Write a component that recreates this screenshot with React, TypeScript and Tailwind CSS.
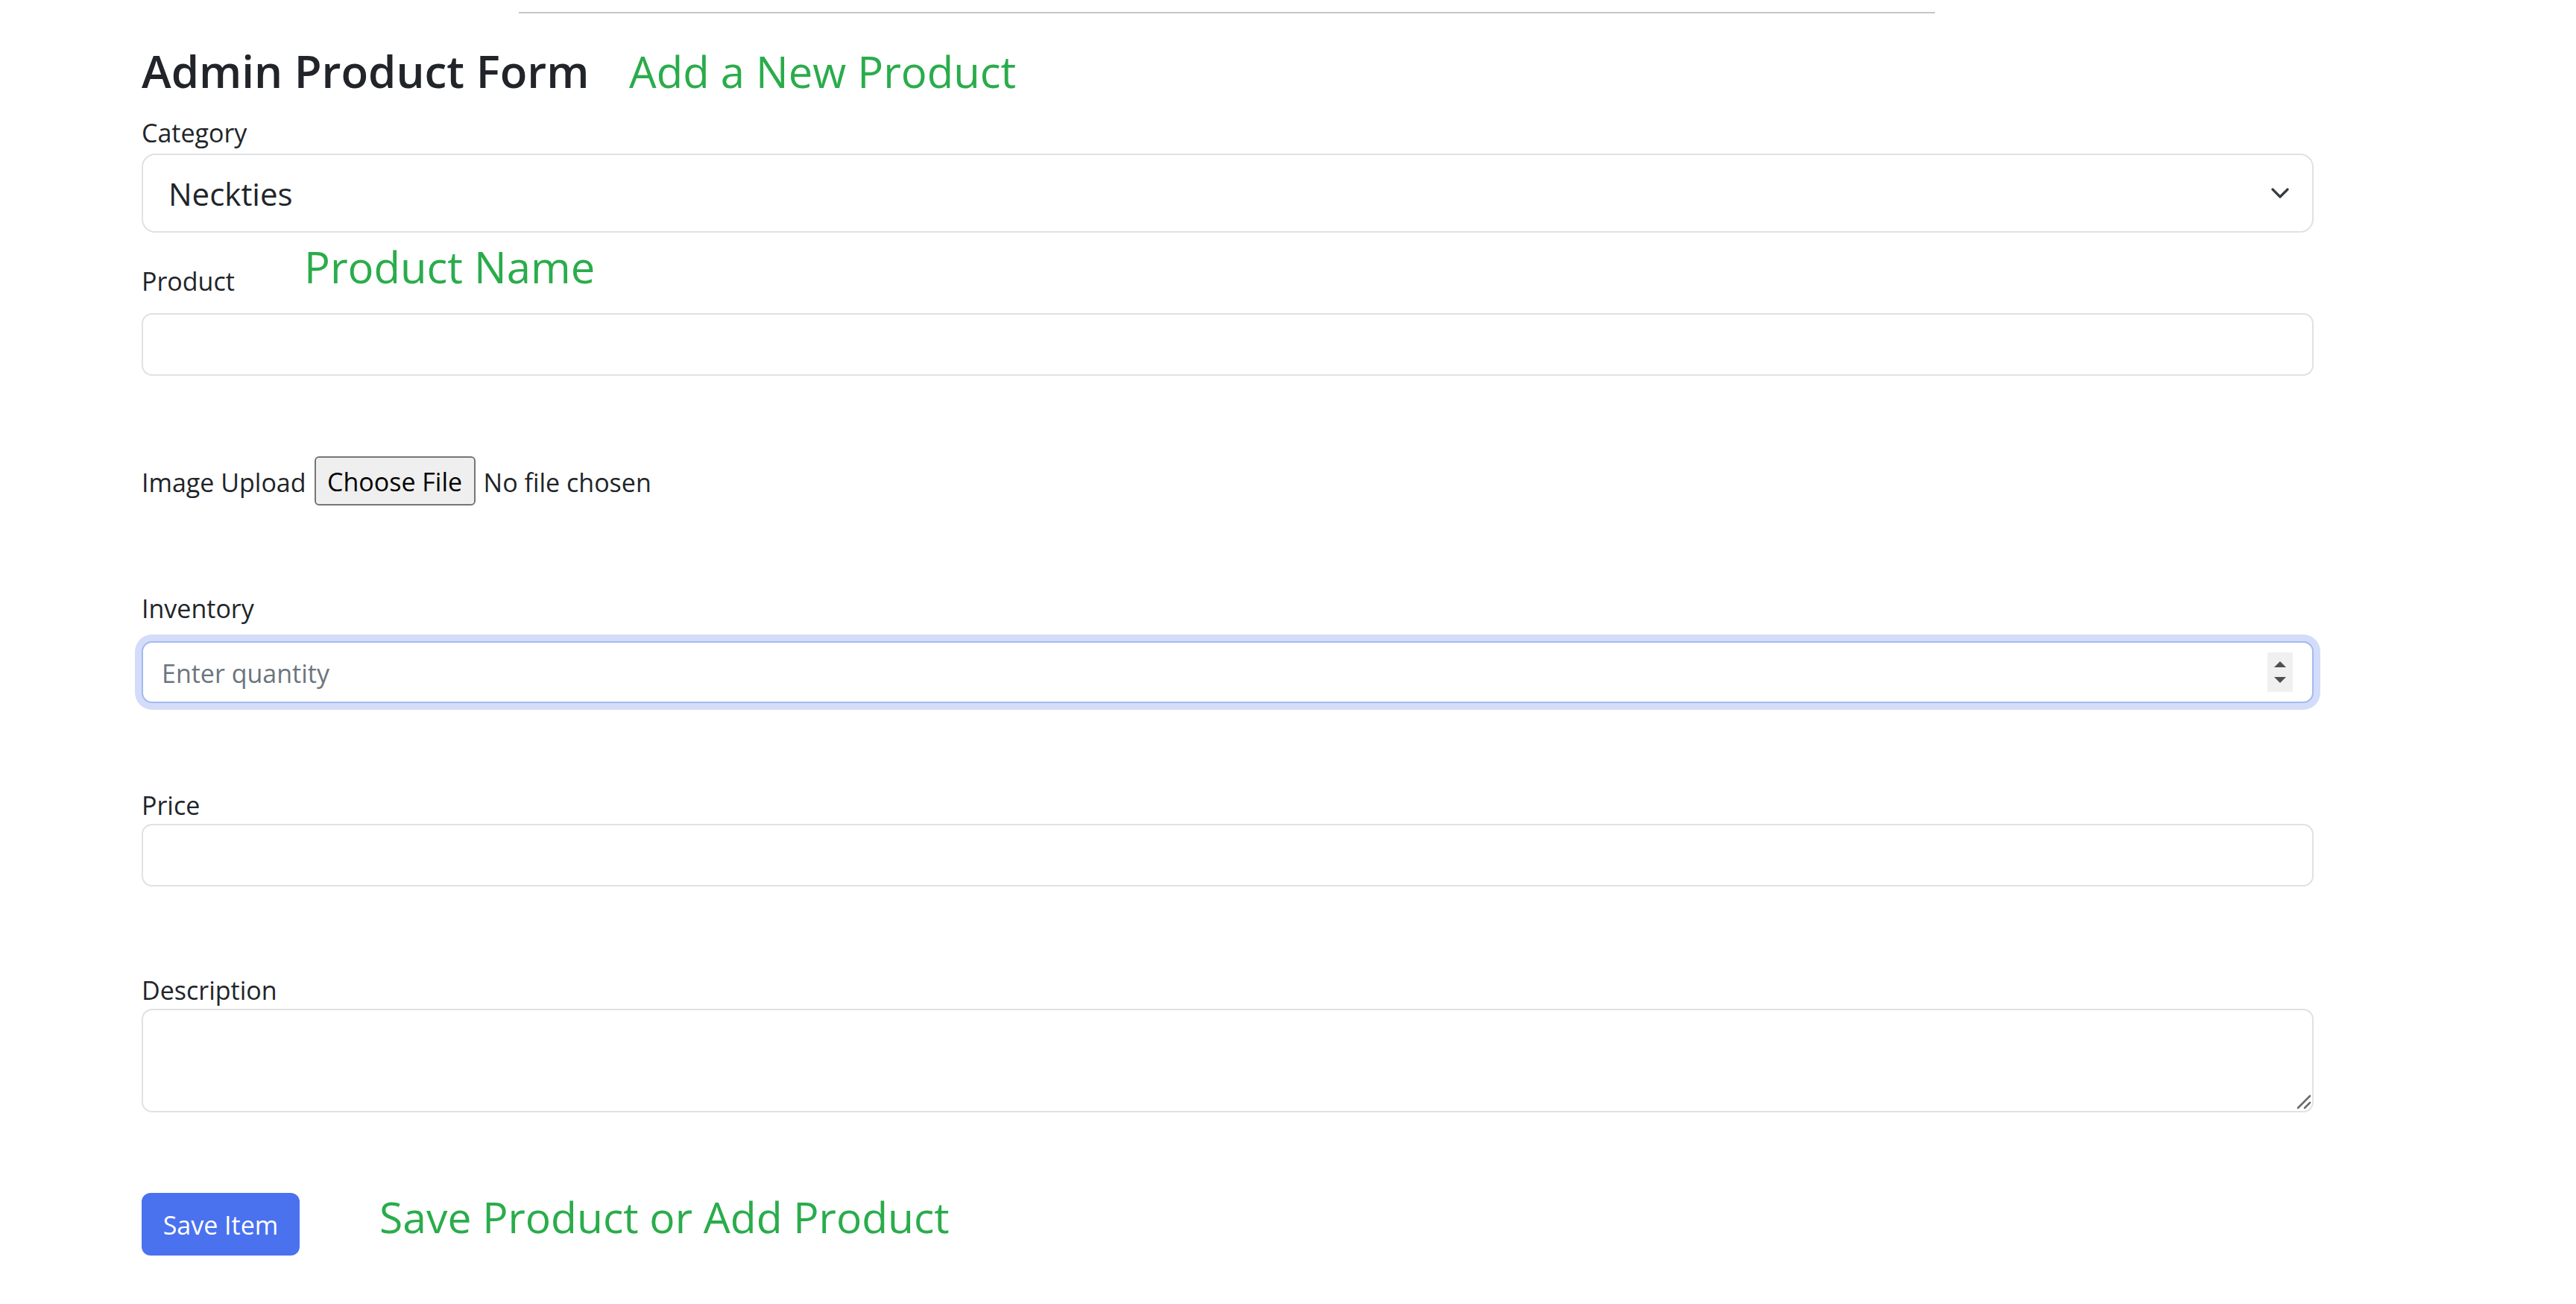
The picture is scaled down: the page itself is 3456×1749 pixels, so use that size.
import React from "react";

const labelCls = "block text-[34px] leading-[54px] text-[#212529] pt-[2px]";
const inputCls =
  "block w-full h-[84px] rounded-[14px] border-2 border-[#dee2e6] bg-white px-[25px] text-[34px] text-[#212529] outline-none";

export default function App() {
  return (
    <div className="min-h-screen w-full bg-white font-['Open_Sans',sans-serif] text-[#212529]">
      <div className="pl-[190px] pt-[16px] pb-[60px]">
        <div className="w-[2914px]">
          {/* top rule */}
          <div className="ml-[506px] h-[2px] w-[1900px] bg-[#c6c6c6]" />

          {/* title */}
          <div className="mt-[42px] flex items-baseline">
            <h3 className="w-[654px] text-[60px] font-semibold leading-[70px] text-[#212529]">
              Admin Product Form
            </h3>
            <span className="text-[58px] leading-[70px] text-[#2aac4b]">
              Add a New Product
            </span>
          </div>

          {/* category */}
          <label className={`${labelCls} mt-[18px]`}>Category</label>
          <div className="relative mt-[1px]">
            <select
              defaultValue="Neckties"
              className="block h-[106px] w-full appearance-none rounded-[18px] border-2 border-[#dee2e6] bg-white pl-[34px] pr-[90px] text-[42px] text-[#212529] outline-none"
            >
              <option>Neckties</option>
              <option>Bow Ties</option>
              <option>Pocket Squares</option>
            </select>
            <svg
              className="pointer-events-none absolute right-[33px] top-[46px]"
              width="24"
              height="14"
              viewBox="0 0 24 14"
              fill="none"
            >
              <path
                d="M2 2l10 10L22 2"
                stroke="#343a40"
                strokeWidth="3.2"
                strokeLinecap="round"
                strokeLinejoin="round"
              />
            </svg>
          </div>

          {/* product */}
          <div className="mt-[11px] flex items-end">
            <label className="block w-[218px] pt-[2px] text-[34px] leading-[54px]">Product</label>
            <span className="mb-[11px] text-[58px] leading-[70px] text-[#2aac4b]">
              Product Name
            </span>
          </div>
          <input type="text" className={`${inputCls} mt-[16px]`} />

          {/* image upload */}
          <div className="mt-[108px] flex h-[66px] items-center text-[34px]">
            <span className="pt-[4px]">Image Upload</span>
            <button
              type="button"
              className="ml-[11px] h-[66px] w-[216px] rounded-[6px] border-2 border-[#767676] bg-[#efefef] pt-[2px] text-[34px] text-black"
            >
              Choose File
            </button>
            <span className="ml-[11px] pt-[4px]">No file chosen</span>
          </div>

          {/* inventory */}
          <label className={`${labelCls} mt-[109px]`}>Inventory</label>
          <div className="relative mt-[17px]">
            <input
              type="text"
              placeholder="Enter quantity"
              className="block h-[83px] w-full rounded-[14px] border-2 border-[#a3b9f1] bg-white px-[25px] pt-[2px] text-[34px] text-[#212529] shadow-[0_0_0_9px_#d3ddf9] outline-none placeholder:text-[#6c757d]"
            />
            <div className="pointer-events-none absolute right-[28px] top-[15px] flex h-[53px] w-[34px] flex-col items-center justify-center gap-[13px] bg-[#f0f0f0]">
              <svg width="16" height="8" viewBox="0 0 16 8">
                <path d="M8 0L16 8H0z" fill="#4f4f4f" />
              </svg>
              <svg width="16" height="8" viewBox="0 0 16 8">
                <path d="M0 0h16L8 8z" fill="#4f4f4f" />
              </svg>
            </div>
          </div>

          {/* price */}
          <label className={`${labelCls} mt-[108px]`}>Price</label>
          <input type="text" className={`${inputCls} mt-[-2px] h-[83px]`} />

          {/* description */}
          <label className={`${labelCls} mt-[110px]`}>Description</label>
          <div className="relative mt-[-2px]">
            <textarea className="block h-[139px] w-full resize-none rounded-[14px] border-2 border-[#dee2e6] bg-white px-[25px] py-[14px] text-[34px] text-[#212529] outline-none" />
            <svg
              className="pointer-events-none absolute bottom-[4px] right-[3px]"
              width="20"
              height="20"
              viewBox="0 0 20 20"
              fill="none"
            >
              <path d="M2 18L18 2" stroke="#6b6b6b" strokeWidth="2.6" strokeLinecap="round" />
              <path d="M11 18L18 11" stroke="#6b6b6b" strokeWidth="2.6" strokeLinecap="round" />
            </svg>
          </div>

          {/* save */}
          <div className="mt-[108px] flex items-start">
            <button
              type="button"
              className="h-[84px] w-[212px] rounded-[12px] bg-[#4a72ef] pt-[2px] text-[34px] text-white"
            >
              Save Item
            </button>
            <span className="ml-[107px] mt-[-3px] text-[57px] leading-[70px] text-[#2aac4b]">
              Save Product or Add Product
            </span>
          </div>
        </div>
      </div>
    </div>
  );
}
